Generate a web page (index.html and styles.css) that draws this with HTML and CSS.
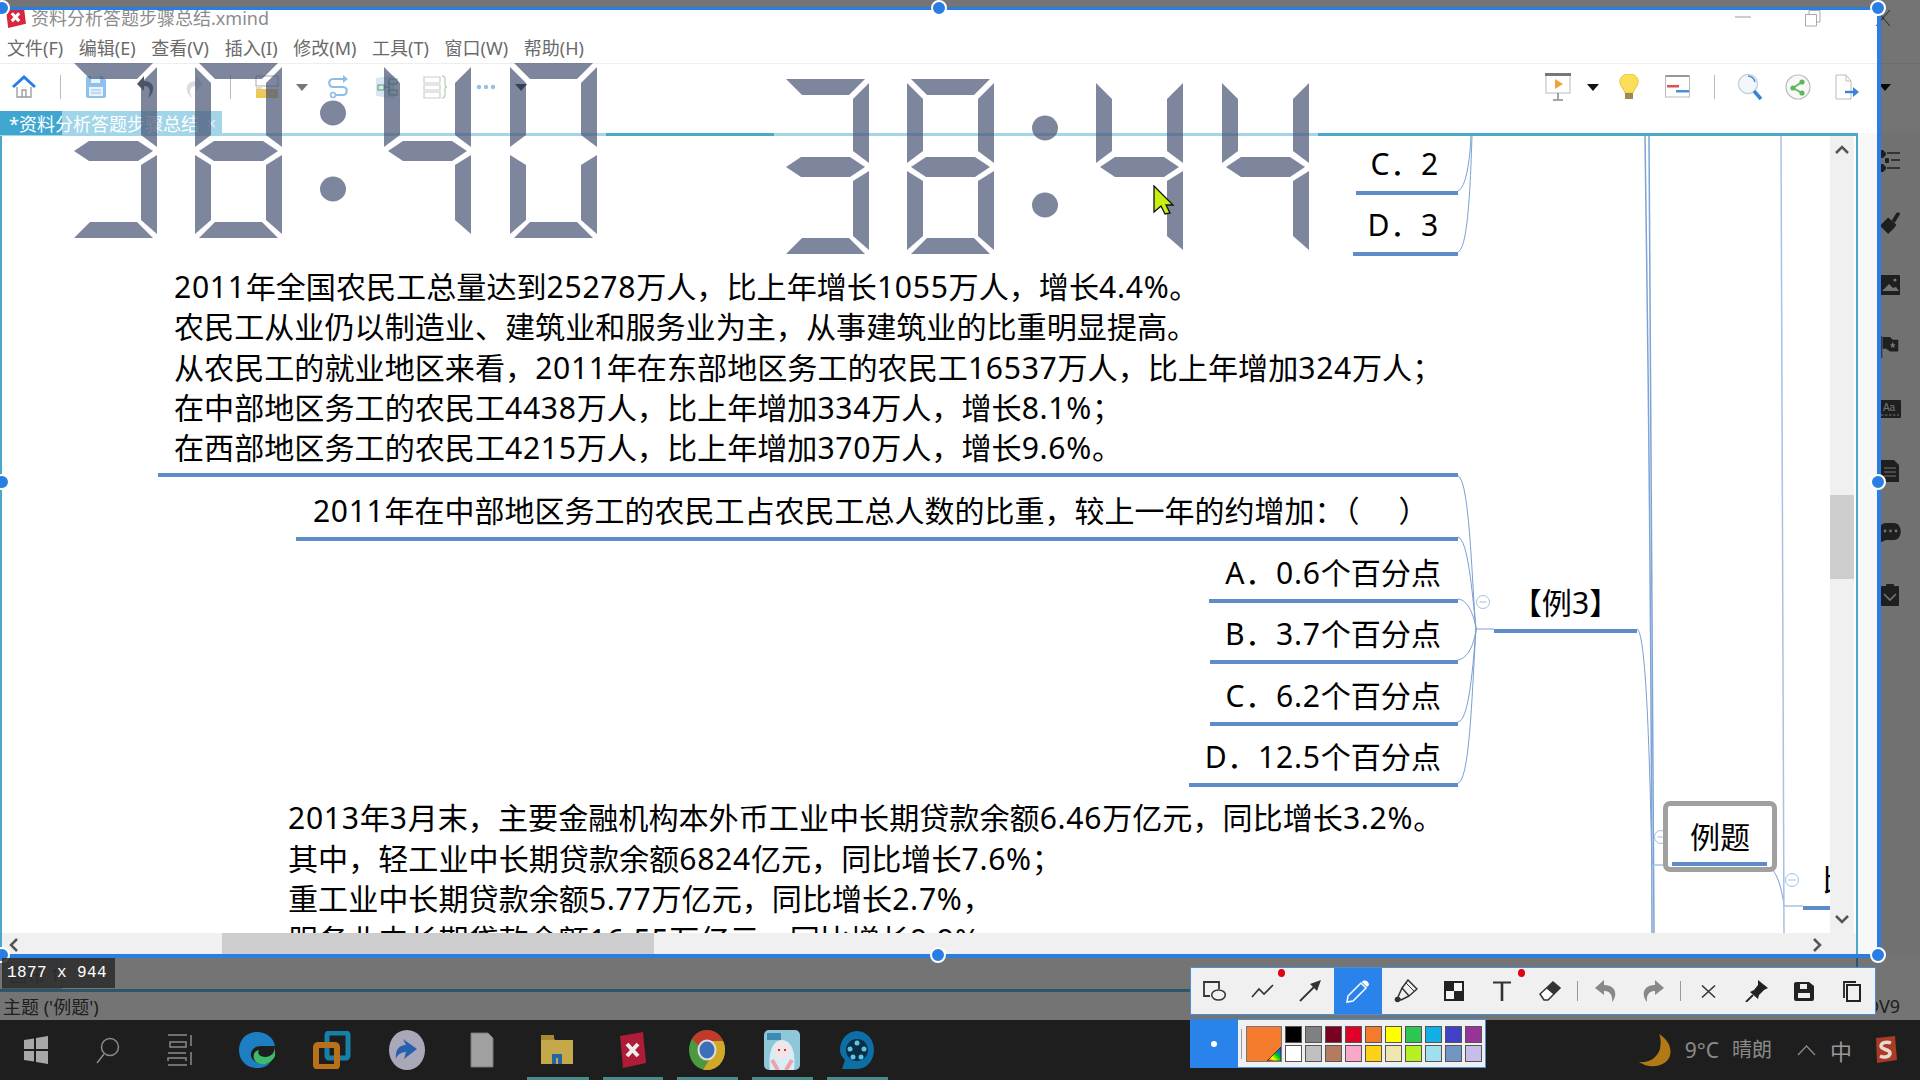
FILE: index.html
```html
<!DOCTYPE html>
<html lang="zh-CN">
<head>
<meta charset="utf-8">
<title>资料分析答题步骤总结.xmind</title>
<link rel="stylesheet" href="styles.css">
</head>
<body>
<div class="screen">
  <div class="app">
    <header class="titlebar">
      <svg class="logo" viewBox="0 0 20 20"><path d="M1 3 18 0 20 16 3 20Z" fill="#d8263f"/><path d="M6.500 6 13.500 13.500M13.500 6 6.500 13.500" stroke="#fff" stroke-width="3"/></svg>
      <span class="title">资料分析答题步骤总结.xmind</span>
      <div class="winbtns">
        <span class="winbtn"><svg width="16" height="16" viewBox="0 0 16 16"><path d="M0 8H16" stroke="#999"/></svg></span>
        <span class="winbtn"><svg width="16" height="18" viewBox="0 0 16 18"><path d="M.5 5.500H11.500V17H.5ZM4 5V1.500H15V13H12" fill="none" stroke="#aaa"/></svg></span>
        <span class="winbtn"><svg width="16" height="18" viewBox="0 0 16 18"><path d="M1 1 15 17M15 1 1 17" stroke="#555"/></svg></span>
      </div>
    </header>
    <nav class="menubar">
      <span>文件(F)</span><span>编辑(E)</span><span>查看(V)</span><span>插入(I)</span><span>修改(M)</span><span>工具(T)</span><span>窗口(W)</span><span>帮助(H)</span>
    </nav>
    <div class="toolbar">
      <div class="tools tools-left">
        <span><svg width="26" height="26" viewBox="0 0 26 26"><path d="M6 13V23H20V13M11 23V16H15V23" fill="none" stroke="#999" stroke-width="1.300"/><path d="M2 13 13 3 24 13" fill="none" stroke="#2a7de1" stroke-width="3"/></svg></span>
        <span><i class="sep"></i></span>
        <span><svg width="22" height="24" viewBox="0 0 22 24"><path d="M1 3Q1 1 3 1H17L21 5V21Q21 23 19 23H3Q1 23 1 21Z" fill="#8fc0ee"/><rect x="6" y="1" width="9" height="7" fill="#e8f3fc"/><rect x="4" y="12" width="14" height="9" fill="#e8f3fc"/><path d="M6 15H16M6 18H16" stroke="#8fc0ee"/></svg></span>
        <span><svg width="20" height="26" viewBox="0 0 20 26"><path d="M8 2 1 10 8 17V12C13 12 16 15 12 24 19 19 20 7 8 7Z" fill="#555"/></svg></span>
        <span><svg width="20" height="26" viewBox="0 0 20 26"><path d="M12 2 19 10 12 17V12C7 12 4 15 8 24 1 19 0 7 12 7Z" fill="#ddd"/></svg></span>
        <span><i class="sep"></i></span>
        <span><svg width="24" height="24" viewBox="0 0 24 24"><rect x="1" y="1" width="22" height="10" fill="#fff" stroke="#aaa"/><rect x="1" y="14" width="22" height="9" fill="#ecc95a"/><rect x="1" y="11" width="6" height="3" fill="#ddd"/></svg></span>
        <span><i class="caret caret-gray"></i></span>
        <span><svg width="24" height="26" viewBox="0 0 24 26"><path d="M20 5H7C2 5 2 13 7 13H17C22 13 22 21 17 21H10" fill="none" stroke="#8cbfe8" stroke-width="2.200"/><path d="M17 1 22 5 17 9Z" fill="#8cbfe8"/><circle cx="7" cy="21" r="2.500" fill="none" stroke="#8cbfe8" stroke-width="1.600"/></svg></span>
        <span><svg width="26" height="26" viewBox="0 0 26 26"><path d="M1 4 20 1V25L1 22Z" fill="#d8e8f2"/><rect x="3" y="11" width="6" height="5" fill="none" stroke="#5f9a6a"/><rect x="14" y="5" width="8" height="5" fill="none" stroke="#5f9a6a"/><rect x="14" y="16" width="8" height="5" fill="none" stroke="#5f9a6a"/><path d="M9 13H14M14 7V19" stroke="#5f9a6a"/></svg></span>
        <span><svg width="26" height="26" viewBox="0 0 26 26"><path d="M2 3H18V9H2ZM2 11H18V16H2ZM2 18H18V24H2Z" fill="none" stroke="#ccc" stroke-width="1.200"/><path d="M20 2Q23 2 23 5V11Q23 13 25 13 23 13 23 15V21Q23 24 20 24" fill="none" stroke="#bcd8b0" stroke-width="1.400"/></svg></span>
        <span><svg width="20" height="6" viewBox="0 0 20 6"><circle cx="3" cy="3" r="2.200" fill="#9cbfe0"/><circle cx="10" cy="3" r="2.200" fill="#9cbfe0"/><circle cx="17" cy="3" r="2.200" fill="#9cbfe0"/></svg></span>
        <span><i class="caret"></i></span>
      </div>
      <div class="tools tools-right">
        <span><svg width="26" height="28" viewBox="0 0 26 28"><rect x="1" y="2" width="24" height="18" fill="#fff" stroke="#bbb"/><rect y="0" width="26" height="3" fill="#777"/><path d="M10 6 18 11 10 16Z" fill="#eda53a"/><path d="M13 20V26M8 27H18" stroke="#888" stroke-width="1.500"/></svg></span>
        <span><i class="caret"></i></span>
        <span><svg width="20" height="26" viewBox="0 0 20 26"><path d="M10 0C3 0 0 5 1 9 2 13 5 15 6 19H14C15 15 18 13 19 9 20 5 17 0 10 0Z" fill="#fbdf58" stroke="#e8c334"/><rect x="6" y="19" width="8" height="6" fill="#9c8a50"/></svg></span>
        <span><svg width="26" height="24" viewBox="0 0 26 24"><rect x=".5" y="1" width="24" height="21" fill="#fff" stroke="#bbb"/><rect y="0" x=".5" width="24" height="2" fill="#999"/><rect x="2" y="10" width="12" height="2.500" fill="#d9534f"/><rect x="11" y="15" width="13" height="2.500" fill="#4a90d9"/></svg></span>
        <span><i class="sep"></i></span>
        <span><svg width="26" height="28" viewBox="0 0 26 28"><circle cx="11" cy="11" r="9.500" fill="#f2f7fc" stroke="#c4d4e4" stroke-width="1.500"/><path d="M11 3A8 8 0 0 1 18 9" fill="none" stroke="#4a90d9" stroke-width="1.500"/><path d="M17 18 24 26" stroke="#3a84d8" stroke-width="3.500"/></svg></span>
        <span><svg width="26" height="26" viewBox="0 0 26 26"><circle cx="13" cy="13" r="12" fill="#f8f8f8" stroke="#bbb" stroke-width="1.200"/><path d="M8 14 17 8M8 14 17 19" stroke="#5cb85c" stroke-width="1.800"/><circle cx="8" cy="14" r="2.600" fill="#5cb85c"/><circle cx="17" cy="8" r="2.600" fill="#5cb85c"/><circle cx="17" cy="19" r="2.600" fill="#5cb85c"/></svg></span>
        <span><svg width="26" height="26" viewBox="0 0 26 26"><path d="M1 1H11L16 7V25H1Z" fill="#fff" stroke="#bbb"/><path d="M11 1V7H16" fill="none" stroke="#bbb"/><path d="M10 18H20" stroke="#3a84d8" stroke-width="2.400"/><path d="M18 13 24 18 18 23Z" fill="#3a84d8"/></svg></span>
        <span><i class="caret"></i></span>
      </div>
    </div>
    <div class="tabstrip">
      <div class="doctab"><span>*资料分析答题步骤总结</span><b>×</b></div>
    </div>
    <main class="workbench">
      <section class="editor">
        <div class="editor-top"></div>
        <div class="editor-body">
          <div class="canvas">
            <svg class="links" viewBox="2 136 1828 797" width="1828" height="797">
              <g fill="none" stroke="#7a9fd2" stroke-width="1">
                <path d="M1458 191C1466 188 1470 160 1471 136"/>
                <path d="M1458 252C1467 248 1470 200 1472 136"/>
                <path d="M1458 476C1470 480 1472 590 1476 629"/>
                <path d="M1458 537C1468 540 1472 590 1476 629"/>
                <path d="M1458 599C1468 600 1474 615 1476 629"/>
                <path d="M1458 660C1468 658 1474 645 1476 629"/>
                <path d="M1458 722C1468 720 1472 680 1476 629"/>
                <path d="M1458 783C1470 780 1472 690 1476 629"/>
                <path d="M1476 629H1494"/>
                <path d="M1637 629C1647 632 1650 780 1652 865"/>
                <path d="M1767 866C1776 868 1782 888 1784 906"/>
              </g>
              <g fill="none" stroke="#7ea4d6" stroke-width="1.500">
                <path d="M1645 136C1647 300 1651 500 1652 933"/>
                <path d="M1649 136C1650 300 1653 600 1654 933"/>
              </g>
              <g fill="none" stroke="#a6c2e4" stroke-width="1.500">
                <path d="M1781 136C1782 300 1783 600 1784 933"/>
                <path d="M1653 865H1672M1784 906H1803"/>
              </g>
              <g class="fold"><circle cx="1483" cy="602" r="6.500"/><path d="M1479.500 602H1486.500"/></g>
              <g class="fold"><circle cx="1661" cy="837" r="6.500"/><path d="M1657.500 837H1664.500"/></g>
              <g class="fold"><circle cx="1792" cy="880" r="6.500"/><path d="M1788.500 880H1795.500"/></g>
            </svg>
            <div class="node right short n-c"><span class="d">C．2</span></div>
            <div class="node right short n-d"><span class="d">D．3</span></div>
            <div class="node block n-info"><span class="d">2011</span>年全国农民工总量达到<span class="d">25278</span>万人，比上年增长<span class="d">1055</span>万人，增长<span class="d">4.4%</span>。<br>农民工从业仍以制造业、建筑业和服务业为主，从事建筑业的比重明显提高。<br>从农民工的就业地区来看，<span class="d">2011</span>年在东部地区务工的农民工<span class="d">16537</span>万人，比上年增加<span class="d">324</span>万人；<br>在中部地区务工的农民工<span class="d">4438</span>万人，比上年增加<span class="d">334</span>万人，增长<span class="d">8.1%</span>；<br>在西部地区务工的农民工<span class="d">4215</span>万人，比上年增加<span class="d">370</span>万人，增长<span class="d">9.6%</span>。</div>
            <div class="node n-q"><span class="d">2011</span>年在中部地区务工的农民工占农民工总人数的比重，较上一年的约增加：（&nbsp;&nbsp;&nbsp;&nbsp;&nbsp;）</div>
            <div class="node right n-a1"><span class="d">A．0.6</span>个百分点</div>
            <div class="node right n-a2"><span class="d">B．3.7</span>个百分点</div>
            <div class="node right n-a3"><span class="d">C．6.2</span>个百分点</div>
            <div class="node right n-a4"><span class="d">D．12.5</span>个百分点</div>
            <div class="node center n-ex3">【例3】</div>
            <div class="plain n-info2"><span class="d">2013</span>年<span class="d">3</span>月末，主要金融机构本外币工业中长期贷款余额<span class="d">6.46</span>万亿元，同比增长<span class="d">3.2%</span>。<br>其中，轻工业中长期贷款余额<span class="d">6824</span>亿元，同比增长<span class="d">7.6%</span>；<br>重工业中长期贷款余额<span class="d">5.77</span>万亿元，同比增长<span class="d">2.7%</span>，<br>服务业中长期贷款余额<span class="d">16.55</span>万亿元，同比增长<span class="d">9.9%</span></div>
            <div class="topic"><span class="topic-text">例题</span><i class="topic-line"></i></div>
            <div class="node n-bi">比重</div>
          </div>
          <div class="vscroll">
            <span class="arrow-v"><svg width="14" height="10" viewBox="0 0 14 10"><path d="M1 8 7 2 13 8" fill="none" stroke="#555" stroke-width="2.500"/></svg></span>
            <i class="vthumb"></i>
            <span class="vspace"></span>
            <span class="arrow-v"><svg width="14" height="10" viewBox="0 0 14 10"><path d="M1 2 7 8 13 2" fill="none" stroke="#555" stroke-width="2.500"/></svg></span>
          </div>
        </div>
        <div class="hscroll">
          <span class="arrow-h"><svg width="10" height="14" viewBox="0 0 10 14"><path d="M8 1 2 7 8 13" fill="none" stroke="#555" stroke-width="2.500"/></svg></span>
          <i class="hthumb"></i>
          <span class="hspace"></span>
          <span class="arrow-h arrow-end"><svg width="10" height="14" viewBox="0 0 10 14"><path d="M2 1 8 7 2 13" fill="none" stroke="#555" stroke-width="2.500"/></svg></span>
        </div>
      </section>
      <aside class="sidepanel">
        <svg class="side" viewBox="0 0 20 22"><path d="M0 0H3L6 3V5L3 8H0ZM0 14H3L6 17V19L3 22H0Z"/><rect x="5" y="8" width="4" height="5" rx="1"/><path d="M7 3H20M11 10H20M7 18H20" stroke="#444" stroke-width="1.600"/></svg>
        <svg class="side" viewBox="0 0 22 24"><path d="M13 9 18 1C21 -1 23 2 21 4L16 12Z"/><path d="M9 6 18 14 16 17 9 24 0 15 6 9Z"/></svg>
        <svg class="side" viewBox="0 0 22 22"><rect x="1" y="1" width="20" height="20" rx="1"/><path d="M3 17 10 10 14 14 17 13 20 17Z" fill="#fff"/><circle cx="16" cy="6" r="1.600" fill="#fff"/></svg>
        <svg class="side" viewBox="0 0 20 24"><path d="M1 0V24" stroke="#444" stroke-width="1"/><path d="M2 1H10L13 4H19V17H10L6 14H2Z"/><path d="M13 6 14 9H16L14.500 11 15 13 13 12 11 13 11.500 11 10 9H12Z" fill="#fff"/></svg>
        <svg class="side side-wide" viewBox="0 0 22 18"><rect width="22" height="18" rx="1"/><path d="M2 15H20" stroke="#fff" stroke-width="1.200" stroke-dasharray="2.500 1.500"/><text class="side-aa" x="10" y="11" text-anchor="middle">Aa</text></svg>
        <svg class="side" viewBox="0 0 20 22"><path d="M1 0H14L19 5V22H1Z"/><path d="M4 8H16M4 12H16M4 16H16" stroke="#fff" stroke-width="1"/></svg>
        <svg class="side side-wide" viewBox="0 0 22 20"><path d="M7 0H15C24 0 24 17 15 17H7L0 20 1 14C-2 8 1 0 7 0Z"/><circle cx="6" cy="8" r="1.400" fill="#fff"/><circle cx="11.500" cy="8" r="1.400" fill="#fff"/><circle cx="17" cy="8" r="1.400" fill="#fff"/></svg>
        <svg class="side" viewBox="0 0 20 22"><rect x="1" y="2" width="18" height="20" rx="1"/><rect x="6" y="0" width="8" height="5" rx="1"/><path d="M4 10 10 16 16 10" fill="none" stroke="#fff" stroke-width="1.600"/></svg>
      </aside>
    </main>
    <div class="sheetbar"><div class="sheet">画布 1</div></div>
    <footer class="statusbar"><span>主题 ('例题')</span><span>DV9</span></footer>
    <div class="taskbar">
      <span class="tb tb-sys"><svg width="26" height="28" viewBox="0 0 26 28"><path d="M1 4 11 2.500V13H1ZM13 2 25 0V13H13ZM1 15H11V25.500L1 24ZM13 15H25V28L13 26Z" fill="#a8a8a8"/></svg></span>
      <span class="tb tb-sys"><svg width="26" height="28" viewBox="0 0 26 28"><circle cx="15" cy="11" r="8.500" fill="none" stroke="#8a8a8a" stroke-width="1.500"/><path d="M9 18 2 27" stroke="#8a8a8a" stroke-width="1.500"/></svg></span>
      <span class="tb tb-sys"><svg width="26" height="32" viewBox="0 0 26 32"><path d="M1 1H20M3 13V8H19V13ZM1 19H19M1 27V24H19V27M1 31H20M24 1V12M24 18V31" fill="none" stroke="#8a8a8a" stroke-width="1.500"/></svg></span>
      <span class="tb tb-first"><svg width="38" height="38" viewBox="0 0 38 38"><path d="M19 1C8 1 1 9 1 19 1 30 9 37 19 37 25 37 29 35 32 32 24 35 15 32 13 25 12 19 17 15 23 15H37C36 7 28 1 19 1Z" fill="#1d7fc2"/><path d="M37 15C37 22 33 26 27 26 21 26 19 22 21 19 15 20 14 27 18 31 25 36 33 33 37 25Z" fill="#3fba6a"/></svg></span>
      <span class="tb"><svg width="38" height="38" viewBox="0 0 38 38"><rect x="14" y="2" width="21" height="25" rx="2" fill="none" stroke="#1780a8" stroke-width="5"/><rect x="3" y="14" width="21" height="22" rx="2" fill="none" stroke="#b8701a" stroke-width="6"/></svg></span>
      <span class="tb"><svg width="36" height="40" viewBox="0 0 36 40"><ellipse cx="18" cy="20" rx="18" ry="20" fill="#a8a8b8"/><path d="M14 9 28 19 15 29 17 22C12 22 8 25 7 29 6 20 10 15 17 15Z" fill="#2660b0"/></svg></span>
      <span class="tb"><svg width="24" height="36" viewBox="0 0 24 36"><path d="M1 1H18L23 6V35H1Z" fill="#a0a0a0" stroke="#777"/></svg></span>
      <span class="tb"><svg width="34" height="32" viewBox="0 0 34 32"><path d="M1 2H12L15 6H33V30H1Z" fill="#c4a84a"/><rect x="1" y="1" width="13" height="5" fill="#a88830"/><path d="M12 30V20H22V30H18V24H16V30Z" fill="#2563a8"/></svg></span>
      <span class="tb"><svg width="30" height="38" viewBox="0 0 30 38"><path d="M3 5 26 1 29 32 6 37Z" fill="#b01c38"/><path d="M10 13 21 25M21 13 10 25" stroke="#eee" stroke-width="4"/></svg></span>
      <span class="tb"><svg width="36" height="40" viewBox="0 0 36 40"><ellipse cx="18" cy="20" rx="18" ry="20" fill="#4c9a3f"/><path d="M18 0C25 0 31 4 34 11H18Z" fill="#c23a2a"/><path d="M34 11C36 15 36 18 36 20 36 32 28 40 18 40H14L24 24C26 20 25 14 22 11Z" fill="#d3a829"/><path d="M3 9C6 4 11 0 18 0V11C14 11 11 13 10 16Z" fill="#c23a2a"/><ellipse cx="18" cy="20" rx="9.500" ry="10.500" fill="#ddd"/><ellipse cx="18" cy="20" rx="7.500" ry="8.500" fill="#3d6fb8"/></svg></span>
      <span class="tb"><svg width="36" height="40" viewBox="0 0 36 40"><rect width="36" height="40" rx="5" fill="#8fc7d8"/><path d="M6 40C4 24 8 10 18 10 28 10 32 24 30 40Z" fill="#d8eef4"/><circle cx="18" cy="20" r="8" fill="#f4e4e4"/><path d="M14 20H16M20 20H22" stroke="#c03050" stroke-width="2"/><path d="M8 30 14 40M28 30 22 40" stroke="#f0a0b0" stroke-width="4"/><rect x="3" y="3" width="14" height="7" fill="#3f8ab0"/></svg></span>
      <span class="tb"><svg width="36" height="40" viewBox="0 0 36 40"><path d="M18 1C28 1 35 10 35 20 35 30 28 39 18 39H3L6 30C3 27 1 24 1 20 1 10 8 1 18 1Z" fill="#0d6fa5"/><circle cx="18" cy="20" r="11" fill="#0a2e44"/><circle cx="18" cy="13" r="2.500" fill="#5fc4e8"/><circle cx="11" cy="19" r="2.500" fill="#5fc4e8"/><circle cx="25" cy="19" r="2.500" fill="#5fc4e8"/><circle cx="14" cy="27" r="2.500" fill="#5fc4e8"/><circle cx="22" cy="27" r="2.500" fill="#5fc4e8"/></svg></span>
      <div class="tray">
        <svg class="moon" width="32" height="33" viewBox="0 0 32 33"><path d="M20 0C30 6 34 16 30 24 25 33 10 35 0 28 10 29 18 24 21 15 22 9 22 4 20 0Z" fill="#b07a14"/></svg>
        <span class="weather">9°C</span><span class="weather weather-cn">晴朗</span>
        <svg class="chev" width="19" height="12" viewBox="0 0 19 12"><path d="M1 11 9.500 2 18 11" fill="none" stroke="#8a8a8a" stroke-width="1.300"/></svg>
        <span class="ime">中</span>
        <svg class="sogou" width="24" height="28" viewBox="0 0 24 28"><path d="M3 2 22 0 24 24 4 27Z" fill="#a83a26"/><path d="M18 7C13 5 8 7 8 10 8 14 17 13 17 17 17 21 11 22 7 20" fill="none" stroke="#e8d8d0" stroke-width="3.500"/></svg>
      </div>
      <i class="running r1"></i><i class="running r2"></i><i class="running r3"></i><i class="running r4"></i><i class="running r5"></i>
    </div>
  </div>

  <svg class="clock" width="1920" height="270" viewBox="0 0 1920 270">
    <defs>
      <polygon id="top" points="4,0 83,0 67,16 20,16"/>
      <polygon id="ul" points="0,4 16,20 16,72 0,84"/>
      <polygon id="ur" points="87,4 87,84 71,72 71,20"/>
      <polygon id="mid" points="4,88 19,78 68,78 83,88 68,98 19,98"/>
      <polygon id="ll" points="0,92 16,102 16,157 0,171"/>
      <polygon id="lr" points="87,92 87,171 71,157 71,102"/>
      <polygon id="bot" points="4,175 20,159 67,159 83,175"/>
      <g id="d3"><use href="#top"/><use href="#ur"/><use href="#mid"/><use href="#lr"/><use href="#bot"/></g>
      <g id="d8"><use href="#top"/><use href="#ul"/><use href="#ur"/><use href="#mid"/><use href="#ll"/><use href="#lr"/><use href="#bot"/></g>
      <g id="d4"><use href="#ul"/><use href="#ur"/><use href="#mid"/><use href="#lr"/></g>
      <g id="d0"><use href="#top"/><use href="#ul"/><use href="#ur"/><use href="#ll"/><use href="#lr"/><use href="#bot"/></g>
    </defs>
    <g transform="translate(70 63)"><use href="#d3"/></g>
    <g transform="translate(195 63)"><use href="#d8"/></g>
    <ellipse cx="333" cy="113" rx="13" ry="12.500"/><ellipse cx="333" cy="189" rx="13" ry="12.500"/>
    <g transform="translate(384 63)"><use href="#d4"/></g>
    <g transform="translate(510 63)"><use href="#d0"/></g>
    <g transform="translate(782 79)"><use href="#d3"/></g>
    <g transform="translate(907 79)"><use href="#d8"/></g>
    <ellipse cx="1045" cy="128" rx="13" ry="12.500"/><ellipse cx="1045" cy="205" rx="13" ry="12.500"/>
    <g transform="translate(1096 79)"><use href="#d4"/></g>
    <g transform="translate(1222 79)"><use href="#d4"/></g>
  </svg>

  <div class="selection">
    <i class="handle h-tl"></i><i class="handle h-tc"></i><i class="handle h-tr"></i>
    <i class="handle h-ml"></i><i class="handle h-mr"></i>
    <i class="handle h-bl"></i><i class="handle h-bc"></i><i class="handle h-br"></i>
  </div>
  <div class="sizetip">1877 x 944</div>

  <div class="drawbar">
    <span class="dbtn"><svg width="23" height="20" viewBox="0 0 23 20"><path d="M16 8V1H1V15H7" fill="none" stroke="#333" stroke-width="1.800"/><ellipse cx="15.500" cy="14" rx="6.800" ry="5" fill="none" stroke="#333" stroke-width="1.500"/></svg></span>
    <span class="dbtn"><svg width="23" height="14" viewBox="0 0 23 14"><path d="M1 13 8 5 13 10 22 1" fill="none" stroke="#333" stroke-width="1.600"/></svg></span>
    <span class="dbtn"><svg width="22" height="22" viewBox="0 0 22 22"><path d="M1 21 17 5" stroke="#333" stroke-width="1.800"/><path d="M11 4 22 0 18 11Z" fill="#333"/></svg></span>
    <span class="dbtn dbtn-on"><svg width="24" height="24" viewBox="0 0 24 24"><path d="M2 17 15 4 20 9 7 22 1 23Z" fill="none" stroke="#fff" stroke-width="1.500"/><path d="M16 3C18 0 23 2 23 6L21 8Z" fill="#fff"/></svg></span>
    <span class="dbtn"><svg width="24" height="24" viewBox="0 0 24 24"><path d="M8 9 14 1 23 10 15 17ZM8 9 4 18 7 21 15 17" fill="none" stroke="#333" stroke-width="1.500"/><path d="M12 4 20 12" stroke="#333"/><circle cx="3.500" cy="20.500" r="2.800" fill="#333"/></svg></span>
    <span class="dbtn"><svg width="20" height="20" viewBox="0 0 20 20"><rect width="20" height="20" fill="#222"/><rect x="10" y="2" width="8" height="8" fill="#f5f5f5"/><rect x="2" y="10" width="8" height="8" fill="#f5f5f5"/></svg></span>
    <span class="dbtn"><svg width="18" height="20" viewBox="0 0 18 20"><path d="M0 1.500H18" stroke="#333" stroke-width="2"/><path d="M9 1V20" stroke="#333" stroke-width="2.600"/></svg></span>
    <span class="dbtn"><svg width="22" height="20" viewBox="0 0 22 20"><path d="M14 1 21 7 9 19H5L1 13Z" fill="#fff" stroke="#333" stroke-width="1.500"/><path d="M14 1 21 7 14.500 13.500 7.500 7.500Z" fill="#333"/></svg></span>
    <i class="dsep"></i>
    <span class="dbtn"><svg width="21" height="22" viewBox="0 0 21 22"><path d="M9 0 0 8 9 15V11C14 11 18 14 17 22 23 15 21 5 9 5Z" fill="#888"/></svg></span>
    <span class="dbtn"><svg width="21" height="22" viewBox="0 0 21 22"><path d="M12 0 21 8 12 15V11C7 11 3 14 4 22-2 15 0 5 12 5Z" fill="#888"/></svg></span>
    <i class="dsep"></i>
    <span class="dbtn"><svg width="15" height="13" viewBox="0 0 15 13"><path d="M1 .5 14 12.500M14 .5 1 12.500" stroke="#333" stroke-width="1.500"/></svg></span>
    <span class="dbtn"><svg width="23" height="22" viewBox="0 0 23 22"><path d="M13 0 23 8 19 10 14 15 13 19 5 12 9 10 13 5Z" fill="#222"/><path d="M8 15 1 22" stroke="#222" stroke-width="1.800"/></svg></span>
    <span class="dbtn"><svg width="20" height="19" viewBox="0 0 20 19"><path d="M2 0H15L20 4V17Q20 19 18 19H2Q0 19 0 17V2Q0 0 2 0Z" fill="#222"/><rect x="6" y="2" width="7" height="5" fill="#f0f0f0"/><rect x="4" y="11" width="12" height="5" fill="#f0f0f0"/></svg></span>
    <span class="dbtn"><svg width="18" height="21" viewBox="0 0 18 21"><path d="M1 17V1H13" fill="none" stroke="#222" stroke-width="1.800"/><rect x="4" y="4" width="13" height="16" fill="#f0f0f0" stroke="#222" stroke-width="2"/></svg></span>
    <i class="reddot rd1"></i><i class="reddot rd2"></i>
  </div>

  <div class="palette">
    <div class="weight"><i></i></div>
    <i class="palsep"></i>
    <div class="current"><svg width="14" height="14" viewBox="0 0 14 14"><defs><linearGradient id="rainbow" x1="0" y1="1" x2="1" y2="0"><stop offset="0" stop-color="#f00"/><stop offset=".3" stop-color="#ff0"/><stop offset=".55" stop-color="#0c0"/><stop offset=".8" stop-color="#06f"/><stop offset="1" stop-color="#a0f"/></linearGradient></defs><path d="M14 0V14H0Z" fill="url(#rainbow)" stroke="#222" stroke-width=".8"/></svg></div>
    <div class="swatches">
      <i class="c01"></i><i class="c02"></i><i class="c03"></i><i class="c04"></i><i class="c05"></i><i class="c06"></i><i class="c07"></i><i class="c08"></i><i class="c09"></i><i class="c10"></i>
      <i class="c11"></i><i class="c12"></i><i class="c13"></i><i class="c14"></i><i class="c15"></i><i class="c16"></i><i class="c17"></i><i class="c18"></i><i class="c19"></i><i class="c20"></i>
    </div>
  </div>

  <svg class="cursor" width="22" height="30" viewBox="0 0 22 30"><path d="M1 1 20 20 13 20 17 28 12 29 8 21 1 27Z" fill="#c8ef10" stroke="#111" stroke-width="1.300"/></svg>
</div>
</body>
</html>
```

FILE: styles.css
```css
* { box-sizing: border-box; }
html, body { margin: 0; padding: 0; background: #fff; }
body { width: 1920px; height: 1080px; overflow: hidden; font-family: "Noto Sans", "Noto Sans CJK SC", sans-serif; color: #000; }
i { display: block; font-style: normal; }
.screen { position: relative; width: 1920px; height: 1080px; overflow: hidden; }
.app { display: flex; flex-direction: column; height: 1080px; }

.titlebar { flex: 0 0 32px; display: flex; align-items: center; padding: 3px 2px 0 5px; background: #fff; }
.logo { width: 21px; height: 21px; margin-right: 5px; }
.title { font-size: 18px; line-height: 24px; color: #8c8c8c; }
.winbtns { display: flex; margin-left: auto; }
.winbtn { width: 70px; display: flex; justify-content: center; }

.menubar { flex: 0 0 31px; display: flex; align-items: center; gap: 15.700px; padding: 0 0 2px 7px; font-size: 18px; color: #6a6a6a; background: #fff; }

.toolbar { flex: 0 0 45px; display: flex; justify-content: space-between; align-items: center; padding: 2px 30px 0 0; border-top: 1px solid #eee; background: #fff; }
.tools { display: grid; align-items: center; justify-items: center; height: 42px; }
.tools > span { display: flex; align-items: center; justify-content: center; }
.tools-left { grid-template-columns: 48px 24px 48px 52px 44px 28px 46px 24px 48px 52px 42px 60px 10px; }
.tools-right { grid-template-columns: 36px 34px 38px 60px 12px 60px 36px 64px 10px; }
.sep { width: 1px; height: 24px; background: #bbb; }
.caret { width: 0; height: 0; border: 6px solid transparent; border-top: 7px solid #111; border-bottom: 0; }
.caret-gray { border-top-color: #777; }

.tabstrip { flex: 0 0 25px; min-height: 0; height: 25px; position: relative; z-index: 2; padding-top: 3px; background: #fff; }
.doctab { display: flex; align-items: center; width: 222px; height: 24px; padding-left: 9px; font-size: 18px; color: #fff; background: linear-gradient(90deg, #3ea6cf 62px, #a3d5e8 62px); }
.doctab b { margin-left: 7px; font-weight: 400; font-size: 18px; color: #e0f2f9; }

.workbench { flex: 0 0 824px; display: flex; min-height: 0; }
.editor { flex: 0 0 1858px; display: flex; flex-direction: column; border-left: 2px solid #4aa8c8; border-right: 2px solid #4aa8c8; background: #fff; }
.editor-top { flex: 0 0 3px; margin-left: -2px; margin-right: -2px; background: linear-gradient(90deg, #a5d6e8 606px, #4aa8c8 606px, #4aa8c8 774px, #a5d6e8 774px, #a5d6e8 1318px, #4aa8c8 1318px); }
.editor-body { flex: 0 0 797px; display: flex; min-height: 0; }
.canvas { position: relative; flex: 0 0 1828px; height: 797px; overflow: hidden; background: #fff; }
.links { position: absolute; left: 0; top: 0; }
.fold circle { fill: #fff; stroke: #a3bfe4; stroke-width: 1; }
.fold path { stroke: #a3bfe4; stroke-width: 1; }

.node { position: absolute; height: 49px; padding-bottom: 7px; border-bottom: 4px solid #5d8cc8; font-size: 30.100px; line-height: 38px; white-space: nowrap; color: #000; }
.node.right { padding-right: 17px; text-align: right; }
.node.short { padding-right: 19px; padding-bottom: 9px; line-height: 36px; }
.node.center { text-align: center; }
.d { letter-spacing: .7px; }
.n-c { left: 1354px; top: 10px; width: 102px; }
.n-d { left: 1351px; top: 71px; width: 105px; }
.n-info { left: 156px; top: 131px; width: 1300px; height: auto; padding-left: 16px; padding-bottom: 5px; line-height: 40.300px; }
.n-q { left: 294px; top: 356px; width: 1162px; padding-left: 17px; font-size: 30px; }
.n-a1 { left: 1207px; top: 418px; width: 249px; }
.n-a2 { left: 1208px; top: 479px; width: 248px; }
.n-a3 { left: 1208px; top: 541px; width: 248px; }
.n-a4 { left: 1187px; top: 602px; width: 269px; }
.n-ex3 { left: 1492px; top: 448px; width: 143px; }
.n-bi { left: 1801px; top: 725px; width: 60px; padding-left: 19px; }
.plain { position: absolute; white-space: nowrap; font-size: 30.100px; line-height: 40.600px; }
.n-info2 { left: 286px; top: 662px; }
.topic { position: absolute; left: 1661px; top: 665px; width: 114px; height: 71px; display: flex; flex-direction: column; padding-top: 11px; background: #fff; border: 5px solid #a0a0a0; border-radius: 7px; }
.topic-text { font-size: 30.100px; line-height: 40px; text-align: center; }
.topic-line { height: 4px; margin: 5px 5px 0 4px; background: #5d8cc8; }

.vscroll { flex: 0 0 24px; display: flex; flex-direction: column; background: #f0f0f0; }
.arrow-v { flex: 0 0 28px; display: flex; align-items: center; justify-content: center; }
.vthumb { flex: 0 0 84px; margin-top: 331px; background: #cdcdcd; }
.vspace { flex: 1; }
.hscroll { flex: 0 0 24px; display: flex; align-items: flex-start; background: #f0f0f0; }
.arrow-h { flex: 0 0 24px; height: 24px; display: flex; align-items: center; justify-content: center; }
.arrow-end { margin-right: 27px; }
.hthumb { flex: 0 0 432px; height: 24px; margin-left: 196px; background: #cdcdcd; }
.hspace { flex: 1; }

.sidepanel { flex: 1; display: flex; flex-direction: column; align-items: center; gap: 40px; padding: 17px 0 0 2px; background: #f8f8f8; }
.side { flex: 0 0 22px; width: 22px; height: 22px; fill: #444; }
.side-aa { font-family: "Liberation Sans", sans-serif; font-size: 10px; fill: #fff; }

.sheetbar { flex: 0 0 35px; padding: 1px 0 0 2px; width: 1858px; border-top: 1px solid #8a8a8a; border-bottom: 3px solid #5fc0e0; border-right: 2px solid #5fc0e0; background: #fff; }
.sheet { width: 60px; height: 30px; padding-left: 6px; font-size: 18px; line-height: 30px; color: #444; border: 1px solid #bbb; }
.statusbar { flex: 0 0 28px; display: flex; justify-content: space-between; align-items: center; padding: 0 20px 0 3px; font-size: 18px; color: #444; background: #fff; }

.taskbar { position: relative; z-index: 5; flex: 0 0 60px; display: flex; align-items: center; background: #1e1e1e; }
.tb { flex: 0 0 75px; display: flex; align-items: center; justify-content: center; }
.tb-sys { flex-basis: 72px; }
.tb-first { margin-left: 3px; }
.tray { display: flex; align-items: center; margin-left: auto; padding-right: 23px; color: #8a8a8a; }
.moon { margin-right: 14px; }
.weather { font-size: 21px; line-height: 30px; }
.weather-cn { margin-left: 13px; font-size: 20px; }
.chev { margin-left: 25px; }
.ime { margin-left: 14px; font-size: 22px; color: #999; }
.sogou { margin-left: 21px; }
.running { position: absolute; bottom: 0; height: 3px; background: #4a8a88; }
.r1 { left: 527px; width: 62px; }
.r2 { left: 603px; width: 60px; }
.r3 { left: 677px; width: 61px; }
.r4 { left: 752px; width: 61px; }
.r5 { left: 827px; width: 61px; }

.clock { position: absolute; left: 0; top: 0; z-index: 3; fill: rgb(70, 82, 115); fill-opacity: .7; pointer-events: none; }

.selection { position: absolute; z-index: 4; left: -3px; top: 7px; width: 1884px; height: 951px; border: solid #2a7de1; border-width: 3px 4px 4px 3px; box-shadow: 0 0 0 3000px rgba(0, 0, 0, .545); pointer-events: none; }
.handle { position: absolute; width: 16px; height: 16px; border-radius: 50%; background: #2a7de1; border: 2px solid #fff; }
.h-tl { left: -6px; top: -10px; }
.h-tc { left: 931px; top: -10px; }
.h-tr { left: 1870px; top: -10px; }
.h-ml { left: -6px; top: 464px; }
.h-mr { left: 1870px; top: 464px; }
.h-bl { left: -6px; top: 937px; }
.h-bc { left: 930px; top: 937px; }
.h-br { left: 1870px; top: 937px; }

.sizetip { position: absolute; z-index: 6; left: 2px; top: 958px; width: 113px; height: 30px; padding-left: 5px; font-family: "Liberation Mono", monospace; font-size: 16px; letter-spacing: .4px; line-height: 30px; color: #fff; background: rgba(45, 45, 45, .88); }

.drawbar { position: absolute; z-index: 7; left: 1190px; top: 967px; width: 686px; height: 48px; display: flex; align-items: stretch; background: #f0f0f0; border: 1px solid #4a90d9; }
.dbtn { flex: 0 0 48px; display: flex; align-items: center; justify-content: center; }
.dbtn:first-child { margin-left: -1px; }
.dbtn-on { background: #2a83ea; }
.dsep { flex: 0 0 1px; margin: 13px 3px; background: #999; }
.reddot { position: absolute; width: 7px; height: 8px; border-radius: 50%; background: #e00012; top: 1px; }
.rd1 { left: 87px; }
.rd2 { left: 327px; }

.palette { position: absolute; z-index: 7; left: 1190px; top: 1019px; width: 296px; height: 49px; display: flex; align-items: center; background: #f0f0f0; border: 1px solid #4a90d9; }
.weight { flex: 0 0 48px; align-self: stretch; margin: -1px 0 -1px -1px; display: flex; align-items: center; justify-content: center; background: #2a83ea; }
.weight i { width: 6px; height: 6px; border-radius: 50%; background: #fff; }
.palsep { flex: 0 0 1px; height: 30px; margin: 0 4px 0 3px; background: #999; }
.current { flex: 0 0 36px; height: 36px; display: flex; align-items: flex-end; justify-content: flex-end; background: #f47b2c; border: 1px solid #777; }
.swatches { margin-left: 3px; display: grid; grid-template-columns: repeat(10, 17px); grid-template-rows: 17px 17px; column-gap: 3px; row-gap: 2px; }
.swatches i { border: 1px solid #555; }
.c01 { background: #000; } .c02 { background: #808080; } .c03 { background: #7a0020; } .c04 { background: #e0002a; } .c05 { background: #f47b2c; }
.c06 { background: #ffff00; } .c07 { background: #2dc653; } .c08 { background: #12afe6; } .c09 { background: #4040c8; } .c10 { background: #9a3399; }
.c11 { background: #fff; } .c12 { background: #c0c0c0; } .c13 { background: #b47b60; } .c14 { background: #f9a8cc; } .c15 { background: #fcd116; }
.c16 { background: #efe6b0; } .c17 { background: #b5f020; } .c18 { background: #9fdfee; } .c19 { background: #7296c4; } .c20 { background: #c6bee8; }

.cursor { position: absolute; z-index: 8; left: 1153px; top: 185px; }
```
